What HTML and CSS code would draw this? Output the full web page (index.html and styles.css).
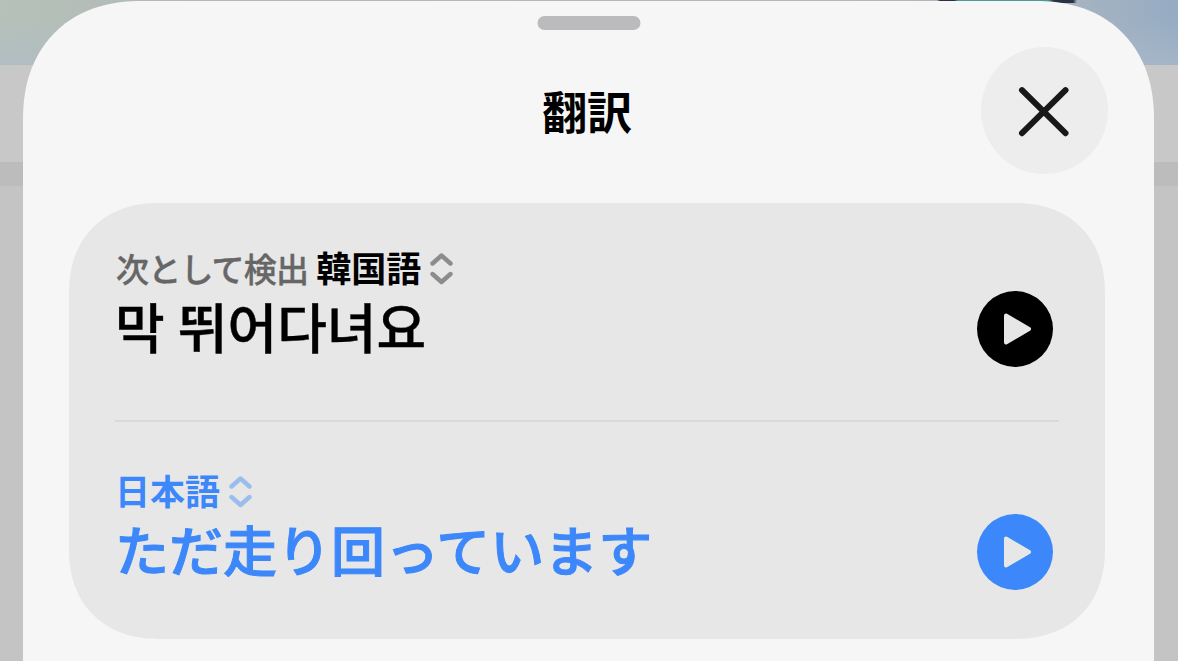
FILE: index.html
```html
<!DOCTYPE html>
<html lang="ja">
<head>
  <meta charset="UTF-8">
  <title>翻訳</title>
  <link rel="stylesheet" href="styles.css">
</head>
<body>
  <div class="backdrop">
    <div class="backdrop-photo"></div>
    <div class="backdrop-bar"></div>
    <div class="backdrop-gap"></div>
  </div>
  <div class="sheet">
    <div class="grabber"></div>
    <header class="sheet-header">
      <h1>翻訳</h1>
      <button class="close-button" aria-label="閉じる">
        <svg width="54" height="52" viewBox="0 0 54 52">
          <path d="M4 5.2 L47.5 48.2 M47.5 5.2 L4 48.2"/>
        </svg>
      </button>
    </header>
    <main class="card">
      <section class="entry source">
        <div class="entry-text">
          <div class="language">
            <span class="detected">次として検出</span>
            <span class="language-name">韓国語</span>
            <svg class="chevrons" width="24" height="34" viewBox="0 0 24 34">
              <path d="M3.5 11.5 L12.5 3.5 L21.5 11.5 M3.5 22 L12.5 30 L21.5 22"/>
            </svg>
          </div>
          <p lang="ko">막 뛰어다녀요</p>
        </div>
        <button class="play-button" aria-label="再生">
          <svg width="76" height="76" viewBox="0 0 76 76">
            <path d="M29 24.5 L52 38 L29 51.5 Z"/>
          </svg>
        </button>
      </section>
      <section class="entry target">
        <div class="entry-text">
          <div class="language">
            <span class="language-name">日本語</span>
            <svg class="chevrons" width="24" height="34" viewBox="0 0 24 34">
              <path d="M3.5 11.5 L12.5 3.5 L21.5 11.5 M3.5 22 L12.5 30 L21.5 22"/>
            </svg>
          </div>
          <p>ただ走り回っています</p>
        </div>
        <button class="play-button" aria-label="再生">
          <svg width="76" height="76" viewBox="0 0 76 76">
            <path d="M29 24.5 L52 38 L29 51.5 Z"/>
          </svg>
        </button>
      </section>
    </main>
  </div>
</body>
</html>
```

FILE: styles.css
```css
* {
  box-sizing: border-box;
}
body {
  margin: 0;
  height: 661px;
  display: flex;
  background: #c4c4c4;
  font-family: "Noto Sans CJK JP", sans-serif;
  color: #000;
}
h1, p {
  margin: 0;
}
button {
  border: none;
  padding: 0;
  display: flex;
  align-items: center;
  justify-content: center;
  border-radius: 50%;
}

/* dimmed page behind the sheet */
.backdrop {
  position: absolute;
  inset: 0;
  z-index: -1;
}
.backdrop-photo {
  height: 65px;
  background:
    linear-gradient(to right, transparent 937px, #253442 940px, #253442 954px, #4b9c97 958px, #4b9c97 1048px, #253442 1054px, #253442 1073px, transparent 1077px) 0 0 / 100% 3px no-repeat,
    linear-gradient(to bottom, transparent 30%, rgba(174, 187, 202, 0.6)),
    linear-gradient(to right, #b5c1b9, #b3b9b6 15%, #b5b7bb 70%, #a5b3c1 92%, #95acc4);
}
.backdrop-bar {
  height: 97px;
  background: #c8c8c8;
}
.backdrop-gap {
  height: 24px;
  background: #bcbcbc;
}

.sheet {
  flex: 1;
  height: 660px;
  margin: 1px 24px 0 23px;
  padding: 15px 49px 0 46px;
  background: #f6f6f6;
  border-radius: 108px 108px 0 0;
}
.grabber {
  width: 103px;
  height: 14px;
  margin: 0 auto;
  border-radius: 7px;
  background: #bbbbbd;
  transform: translateX(1.5px);
}
.sheet-header {
  display: grid;
  grid-template-columns: 124px 1fr 127px;
  align-items: center;
  height: 127px;
  margin: 17px -3px 0 0;
}
h1 {
  grid-column: 2;
  text-align: center;
  font-size: 45px;
  font-weight: 700;
  line-height: 66px;
}
.close-button {
  width: 127px;
  height: 127px;
  background: #ededed;
}
.close-button path {
  fill: none;
  stroke: #181818;
  stroke-width: 6;
  stroke-linecap: round;
}

.card {
  height: 436px;
  margin-top: 29px;
  padding: 0 46px;
  background: #e7e7e7;
  border-radius: 82px;
}

/* continuous corners where the browser can draw them */
@supports (corner-shape: superellipse(1.15)) {
  .sheet {
    border-radius: 118px 118px 0 0;
    corner-shape: superellipse(1.15);
  }
  .card {
    border-radius: 90px;
    corner-shape: superellipse(1.15);
  }
}

.entry {
  display: flex;
  justify-content: space-between;
  height: 217px;
}
.source {
  height: 219px;
  border-bottom: 2px solid #dadada;
  padding-top: 38px;
}
.target {
  padding-top: 42px;
  color: #3c87f9;
}
.language {
  display: flex;
  align-items: center;
  height: 52px;
}
.language-name {
  font-size: 35px;
  font-weight: 700;
  line-height: 52px;
}
.detected {
  margin: 1px 8px 0 1px;
  font-size: 33px;
  font-weight: 500;
  letter-spacing: -0.8px;
  line-height: 52px;
  color: #666;
  -webkit-text-stroke: 0.4px #666;
}
.chevrons {
  margin: 3px 0 0 8px;
}
.chevrons path {
  fill: none;
  stroke: #8c8c8c;
  stroke-width: 4.4;
  stroke-linecap: round;
  stroke-linejoin: round;
}
.target .chevrons path {
  stroke: #99bdec;
}
p {
  margin-top: -1px;
  font-size: 54px;
  font-weight: 500;
  line-height: 68px;
  white-space: nowrap;
  -webkit-text-stroke: 1px currentColor;
}
p:lang(ko) {
  font-family: "Noto Sans CJK KR", sans-serif;
  word-spacing: -2px;
  -webkit-text-stroke-width: 0.4px;
}
.play-button {
  width: 76px;
  height: 76px;
  margin: 50px 6.5px 0 0;
  background: #000;
}
.play-button path {
  fill: #e7e7e7;
  stroke: #e7e7e7;
  stroke-width: 4;
  stroke-linejoin: round;
}
.target .play-button {
  background: #3c87f9;
}
```
